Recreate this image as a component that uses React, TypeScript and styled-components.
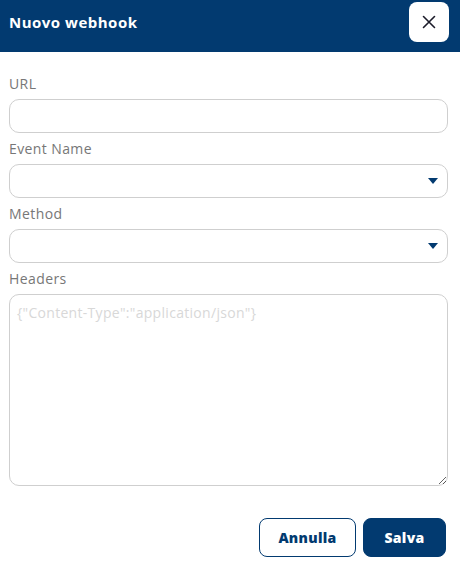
import styled, { createGlobalStyle } from 'styled-components'

const GlobalStyle = createGlobalStyle`
  html, body {
    margin: 0;
    padding: 0;
    background: #ffffff;
  }
  body {
    font-family: 'Open Sans', 'Liberation Sans', sans-serif;
  }
  * {
    box-sizing: border-box;
  }
`

const navy = '#023a70'

const Modal = styled.div`
  width: 460px;
  height: 566px;
  display: flex;
  flex-direction: column;
  background: #fff;
`

const Header = styled.div`
  height: 52px;
  background: ${navy};
  display: flex;
  align-items: center;
  justify-content: space-between;
  padding: 0 11px 0 9px;
`

const Title = styled.h2`
  margin: 0;
  color: #fff;
  font-size: 15px;
  font-weight: 700;
  letter-spacing: 0.5px;
  margin-top: -8px;
`

const CloseButton = styled.button`
  width: 40px;
  height: 40px;
  margin-top: -8px;
  border: none;
  border-radius: 8px;
  background: #fff;
  display: flex;
  align-items: center;
  justify-content: center;
  padding: 0;
  cursor: pointer;
`

const Form = styled.form`
  display: flex;
  flex-direction: column;
  padding: 22px 12px 0 9px;
`

const Field = styled.div`
  display: flex;
  flex-direction: column;
  gap: 5px;
  margin-bottom: 6px;
`

const Label = styled.label`
  font-size: 14px;
  line-height: 20px;
  letter-spacing: 0.4px;
  color: #777;
`

const inputBase = `
  width: 100%;
  border: 1px solid #cfcfcf;
  border-radius: 10px;
  font-family: 'Open Sans', 'Liberation Sans', sans-serif;
  font-size: 14px;
  color: #333;
  background: #fff;
  outline: none;
`

const TextInput = styled.input`
  ${inputBase}
  height: 34px;
  padding: 0 8px;
`

const SelectWrap = styled.div`
  position: relative;
`

const Select = styled.select`
  ${inputBase}
  height: 34px;
  padding: 0 8px;
  appearance: none;
`

const Caret = styled.svg`
  position: absolute;
  right: 10px;
  top: 14px;
  pointer-events: none;
`

const TextArea = styled.textarea`
  ${inputBase}
  height: 192px;
  padding: 8px 7px;
  letter-spacing: 0.3px;
  resize: vertical;
  &::placeholder {
    color: #d8d8d8;
  }
`

const Actions = styled.div`
  display: flex;
  justify-content: flex-end;
  gap: 7px;
  padding: 26px 14px 0 0;
`

const Button = styled.button<{ $primary?: boolean }>`
  height: 39px;
  width: ${(p) => (p.$primary ? '83px' : '97px')};
  border-radius: 8px;
  border: 1.5px solid ${navy};
  background: ${(p) => (p.$primary ? navy : '#fff')};
  color: ${(p) => (p.$primary ? '#fff' : navy)};
  font-family: 'Open Sans', 'Liberation Sans', sans-serif;
  font-size: 14px;
  font-weight: 800;
  letter-spacing: 0.3px;
  cursor: pointer;
`

const SelectField = ({ label }: { label: string }) => (
  <Field>
    <Label>{label}</Label>
    <SelectWrap>
      <Select defaultValue="">
        <option value="" />
      </Select>
      <Caret width="10" height="6" viewBox="0 0 10 6">
        <path d="M0 0h10L5 6z" fill={navy} />
      </Caret>
    </SelectWrap>
  </Field>
)

export default function App() {
  return (
    <>
      <GlobalStyle />
      <Modal>
        <Header>
          <Title>Nuovo webhook</Title>
          <CloseButton aria-label="close">
            <svg width="14" height="14" viewBox="0 0 14 14">
              <path d="M1.5 1.5l11 11M12.5 1.5l-11 11" stroke="#1c1c2a" strokeWidth="1.6" strokeLinecap="round" />
            </svg>
          </CloseButton>
        </Header>
        <Form>
          <Field>
            <Label>URL</Label>
            <TextInput type="text" />
          </Field>
          <SelectField label="Event Name" />
          <SelectField label="Method" />
          <Field>
            <Label>Headers</Label>
            <TextArea placeholder={'{"Content-Type":"application/json"}'} />
          </Field>
        </Form>
        <Actions>
          <Button type="button">Annulla</Button>
          <Button type="button" $primary>
            Salva
          </Button>
        </Actions>
      </Modal>
    </>
  )
}
